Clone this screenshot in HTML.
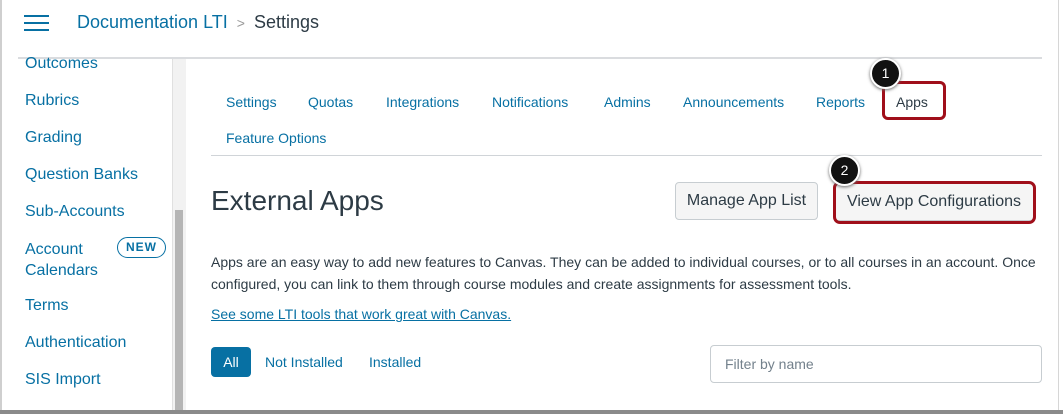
<!DOCTYPE html>
<html><head><style>
*{margin:0;padding:0;box-sizing:border-box}
body{width:1063px;height:414px;overflow:hidden;background:#fff;font-family:"Liberation Sans",Lato,sans-serif;position:relative;color:#2d3b45}
.a{position:absolute;white-space:nowrap}
.blue{color:#0770a3}
.side{font-size:16px;color:#0770a3}
.tab{font-size:14px;color:#0770a3;top:94px}
</style></head><body>
<div class="a" style="left:0;top:0;width:2px;height:414px;background:#cfcfcf"></div>
<div class="a" style="left:0;top:410px;width:1063px;height:4px;background:#8a8a8a"></div>
<div class="a" style="left:1058px;top:0;width:1px;height:410px;background:#d6d6d6"></div>
<div class="a" style="left:24px;top:15px;width:25px;height:2px;background:#0770a3"></div>
<div class="a" style="left:24px;top:22px;width:25px;height:2px;background:#0770a3"></div>
<div class="a" style="left:24px;top:29px;width:25px;height:2px;background:#0770a3"></div>
<div class="a" style="left:77px;top:12px;font-size:18px"><span class="blue">Documentation LTI</span> <span style="color:#999;font-size:14px;margin:0 4px">&gt;</span> Settings</div>
<div class="a" style="left:18px;top:57px;width:1024px;height:2px;background:#dadcdf"></div>
<div class="a" style="left:172px;top:59px;width:14px;height:351px;background:#f2f2f2;border-left:1px solid #e0e0e0"></div>
<div class="a" style="left:175px;top:210px;width:8px;height:200px;background:#b5b5b5"></div>
<div class="a side" style="left:25px;top:55px">Outcomes</div>
<div class="a side" style="left:25px;top:92px">Rubrics</div>
<div class="a side" style="left:25px;top:129px">Grading</div>
<div class="a side" style="left:25px;top:166px">Question Banks</div>
<div class="a side" style="left:25px;top:203px">Sub-Accounts</div>
<div class="a side" style="left:25px;top:239px;line-height:21px">Account<br>Calendars</div>
<div class="a" style="left:117px;top:237px;width:49px;height:21px;border:1px solid #0770a3;border-radius:11px;color:#0770a3;font-size:12px;font-weight:bold;text-align:center;line-height:19px;letter-spacing:1px">NEW</div>
<div class="a side" style="left:25px;top:297px">Terms</div>
<div class="a side" style="left:25px;top:334px">Authentication</div>
<div class="a side" style="left:25px;top:371px">SIS Import</div>
<div class="a tab" style="left:226px">Settings</div>
<div class="a tab" style="left:308px">Quotas</div>
<div class="a tab" style="left:386px">Integrations</div>
<div class="a tab" style="left:492px">Notifications</div>
<div class="a tab" style="left:604px">Admins</div>
<div class="a tab" style="left:683px">Announcements</div>
<div class="a tab" style="left:816px">Reports</div>
<div class="a tab" style="left:896px;color:#2d3b45">Apps</div>
<div class="a" style="left:882px;top:81px;width:64px;height:39px;border:3px solid #a00f1a;border-radius:6px"></div>
<div class="a" style="left:870px;top:58px;width:31px;height:31px;border-radius:50%;background:#111;border:2px solid #fff;box-shadow:0 1px 3px #666;color:#fff;font-size:14px;text-align:center;line-height:27px">1</div>
<div class="a tab" style="left:226px;top:130px">Feature Options</div>
<div class="a" style="left:211px;top:155px;width:831px;height:1px;background:#d0d4d8"></div>
<div class="a" style="left:211px;top:185px;font-size:28px">External Apps</div>
<div class="a" style="left:675px;top:182px;width:143px;height:38px;background:#f5f5f5;border:1px solid #c7cdd1;border-radius:4px;font-size:16px;text-align:center;line-height:36px">Manage App List</div>
<div class="a" style="left:834px;top:182px;width:200px;height:39px;background:#f5f5f5;border:1px solid #c7cdd1;border-radius:4px;font-size:16px;text-align:center;line-height:37px">View App Configurations</div>
<div class="a" style="left:833px;top:181px;width:203px;height:43px;border:3px solid #a00f1a;border-radius:7px"></div>
<div class="a" style="left:829px;top:155px;width:31px;height:31px;border-radius:50%;background:#111;border:2px solid #fff;box-shadow:0 1px 3px #666;color:#fff;font-size:14px;text-align:center;line-height:27px">2</div>
<div class="a" style="left:211px;top:251px;font-size:14px;line-height:22px;white-space:normal;width:830px">Apps are an easy way to add new features to Canvas. They can be added to individual courses, or to all courses in an account. Once configured, you can link to them through course modules and create assignments for assessment tools.</div>
<div class="a" style="left:211px;top:306px;font-size:14px;color:#0770a3;text-decoration:underline">See some LTI tools that work great with Canvas.</div>
<div class="a" style="left:211px;top:347px;width:40px;height:30px;background:#0770a3;border-radius:4px;color:#fff;font-size:14px;text-align:center;line-height:30px">All</div>
<div class="a" style="left:265px;top:354px;font-size:14px;color:#0770a3">Not Installed</div>
<div class="a" style="left:369px;top:354px;font-size:14px;color:#0770a3">Installed</div>
<div class="a" style="left:710px;top:345px;width:332px;height:38px;border:1px solid #c7cdd1;border-radius:4px;font-size:14px;color:#73818c;padding-left:14px;line-height:36px">Filter by name</div>
</body></html>
